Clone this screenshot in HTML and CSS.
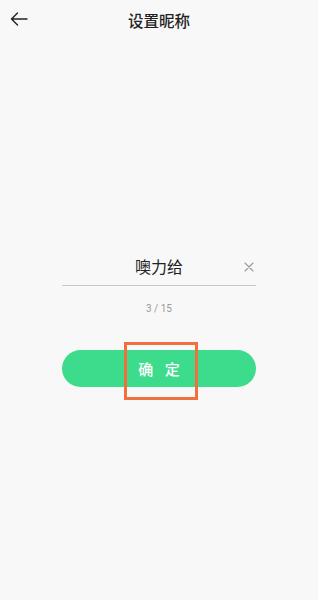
FILE: index.html
```html
<!DOCTYPE html>
<html lang="zh">
<head>
    <meta charset="UTF-8">
    <meta name="viewport" content="width=device-width, initial-scale=1.0">
    <title>设置昵称</title>
    <link rel="stylesheet" href="styles.css">
</head>
<body>
    <div class="page">
        <!-- Top bar -->
        <div class="topbar">
            <button class="back-btn" type="button">
                <svg width="18" height="14" viewBox="0 0 18 14">
                    <path d="M17 7H1.5M7.5 1L1.5 7L7.5 13" fill="none" stroke="#222" stroke-width="1.4" stroke-linecap="round" stroke-linejoin="round"/>
                </svg>
            </button>
            <div class="title">设置昵称</div>
        </div>

        <div class="form">
            <div class="input-row">
                <div class="nick-input">噢力给</div>
                <button class="clear-btn" type="button">
                    <svg width="10" height="10" viewBox="0 0 10 10">
                        <path d="M1 1L9 9M9 1L1 9" stroke="#999" stroke-width="1.1" stroke-linecap="round"/>
                    </svg>
                </button>
            </div>
            <div class="counter">3 / 15</div>

            <div class="btn-wrap">
                <button class="confirm-btn" type="button">确 定</button>
                <span class="highlight"></span>
            </div>
        </div>
    </div>
</body>
</html>
```

FILE: styles.css
```css
* {
    margin: 0;
    padding: 0;
    box-sizing: border-box;
}

body {
    font-family: Roboto, "Noto Sans CJK SC", sans-serif;
    background: #f8f8f8;
    min-height: 100vh;
    color: #222;
}

.page { display: flex; flex-direction: column; }

.topbar { position: relative; height: 40px; display: flex; align-items: center; justify-content: center; }
.back-btn { position: absolute; left: 10px; top: 12px; background: none; border: none; display: flex; }
.title { font-size: 15.5px; font-weight: 500; color: #222; }

.form { padding: 0 62px; margin-top: 213px; display: flex; flex-direction: column; }
.input-row { position: relative; height: 33px; border-bottom: 1px solid #c8c8c8; display: flex; align-items: center; justify-content: center; }
.nick-input { font-size: 16px; color: #222; line-height: 1; margin-top: -3px; }
.clear-btn { position: absolute; right: 2px; top: 9px; background: none; border: none; display: flex; }
.counter { text-align: center; font-size: 10px; color: #999; margin-top: 17px; }

.btn-wrap { position: relative; margin-top: 36px; }
.confirm-btn { width: 100%; height: 37px; border: none; border-radius: 19px; background: #3ddc8c; color: #fff; font-size: 15px; font-weight: 500; font-family: Roboto, "Noto Sans CJK SC", sans-serif; letter-spacing: 4px; text-indent: 4px; }
.highlight { position: absolute; left: 62px; top: -8px; width: 74px; height: 58px; border: 3px solid #f2703e; }
```
